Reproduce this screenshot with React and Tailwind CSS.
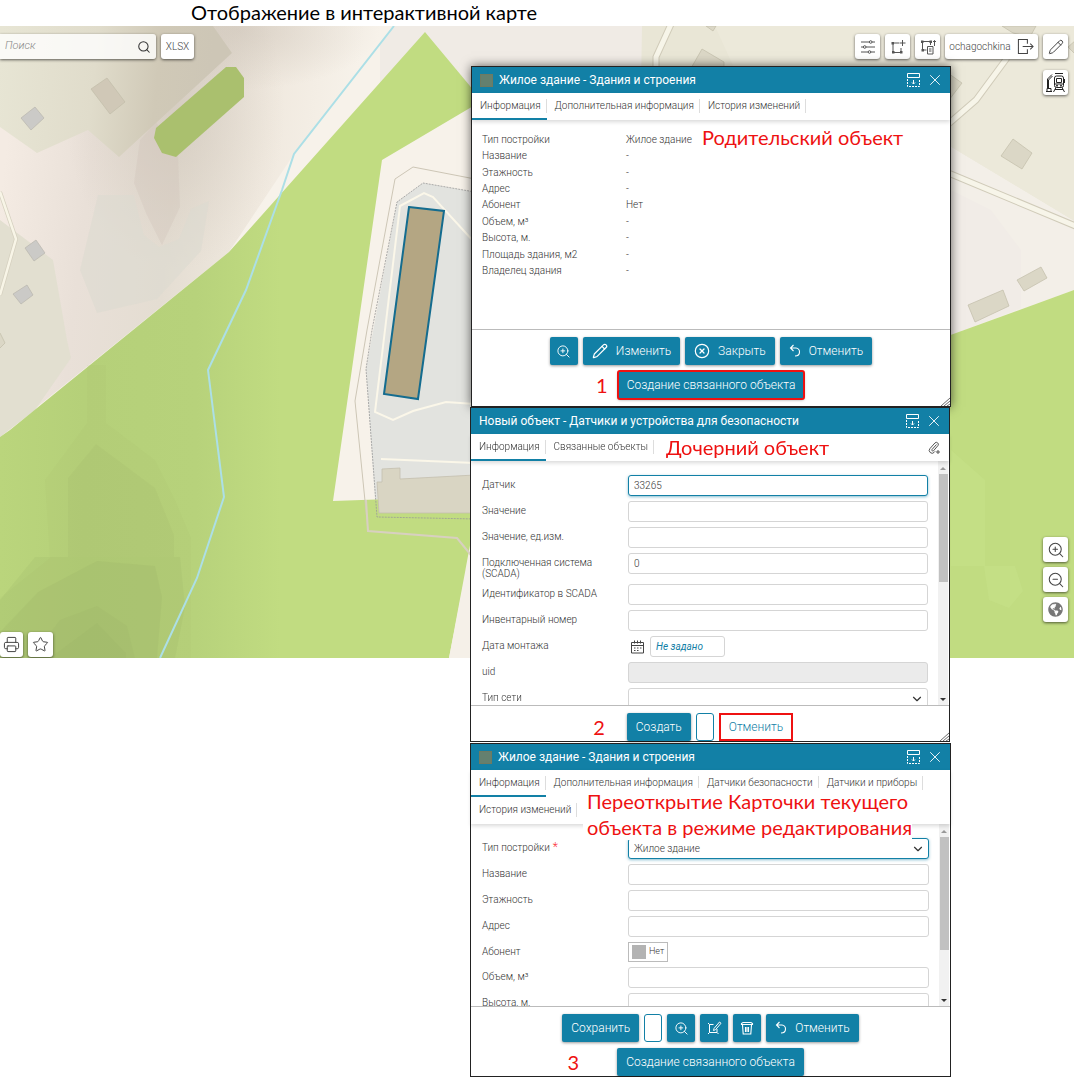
import { useState } from 'react';
import { Search, Star, Pencil, CircleX, X, ChevronDown, ZoomIn, ZoomOut, Printer } from 'lucide-react';
import { FaGlobeAmericas } from 'react-icons/fa';

const parentRows = [
  ['Тип постройки', 'Жилое здание'],
  ['Название', '-'],
  ['Этажность', '-'],
  ['Адрес', '-'],
  ['Абонент', 'Нет'],
  ['Объем, м³', '-'],
  ['Высота, м.', '-'],
  ['Площадь здания, м2', '-'],
  ['Владелец здания', '-'],
];

const SlidersIcon = () => (
  <svg width="16" height="16" viewBox="0 0 16 16" fill="none" stroke="#555" strokeWidth="1">
    <path d="M1 3h8.500M12 3h3M1 8h2.500M6 8h9M1 13h7M11 13h4" />
    <circle cx="10.700" cy="3" r="1.300" />
    <circle cx="4.700" cy="8" r="1.300" />
    <circle cx="9.500" cy="13" r="1.300" />
  </svg>
);

const AreaAddIcon = () => (
  <svg width="16" height="16" viewBox="0 0 16 16" fill="none" stroke="#555" strokeWidth="1">
    <path d="M2 4h7M3 4v9.500M3 13.500h8M11 9v4M12.500 1v6M9.500 4h6" />
    <path d="M1.500 3h2.500v2.500H1.500zM2 12h2.500v2.500H2zM10 12h2.500v2.500H10z" fill="#555" stroke="none" />
  </svg>
);

const AreaListIcon = () => (
  <svg width="16" height="16" viewBox="0 0 16 16" fill="none" stroke="#555" strokeWidth="1">
    <path d="M2 2.500h9M2.500 3v8M10.500 3v3M2.500 11h4M14.500 7V1.500M13 3l1.500-1.500L16 3" />
    <path d="M1 1.500h2.500V4H1zM9.500 1.500H12V4H9.500zM1.500 10H4v2.500H1.500z" fill="#555" stroke="none" />
    <path d="M7.500 7.500h5.500v7.500H7.500zM9 10h2.500M9 12h2.500" />
  </svg>
);

const ExitIcon = () => (
  <svg width="17" height="17" viewBox="0 0 18 18" fill="none" stroke="#444" strokeWidth="1.100">
    <path d="M11 6V1.500H1.500v15H11v-4.500M6 9h11M14 6l3 3-3 3" />
  </svg>
);

const TrainIcon = () => (
  <svg width="21" height="21" viewBox="0 0 21 21" fill="none" stroke="#222" strokeWidth="1">
    <path d="M1 19.500h6M2 19.500v-3h4v3M2.500 16V7L7 2.500M3.500 16V8L7.500 4M10 1.500h8" />
    <rect x="9.500" y="4" width="9" height="11.500" rx="2" />
    <path d="M11.500 6.500h5v4h-5zM10 12h8M11 15.500L8.500 20M17 15.500l2.500 4.500M10 17.500h8M19.500 7v4" />
    <circle cx="12" cy="13.700" r=".6" fill="#222" />
    <circle cx="16" cy="13.700" r=".6" fill="#222" />
  </svg>
);

const DockIcon = () => (
  <svg width="13" height="14" viewBox="0 0 13 14" fill="none" stroke="currentColor" strokeWidth="1">
    <path d="M.5.500h12v4H.500z" />
    <path d="M.5 6v7.500h12V6" strokeDasharray="2 1" />
    <path d="M6.500 7v4M5 9.500l1.500 1.500L8 9.500" />
  </svg>
);

const UndoIcon = () => (
  <svg width="12" height="14" viewBox="0 0 12 14" fill="none" stroke="currentColor" strokeWidth="1.100">
    <path d="M4.500 1L1.500 4l3 3M1.500 4h5.500a3.700 3.700 0 0 1 3.500 4c0 2.500-2 4-4.500 4" />
  </svg>
);

const ClipIcon = () => (
  <svg width="14" height="14" viewBox="0 0 14 14" fill="none" stroke="#555" strokeWidth="1">
    <path d="M9.500 3.500l-4.500 5a1 1 0 0 0 1.500 1.300l4.500-5.300a2 2 0 0 0-3-2.600L3 7.500a2.800 2.800 0 0 0 4.200 3.800l1-1M11 9v4M9 11h4" />
  </svg>
);

const CalendarIcon = () => (
  <svg width="13" height="14" viewBox="0 0 13 14" fill="none" stroke="#444" strokeWidth="1">
    <path d="M.5 2.500h12v10.500H.500zM.5 5.500h12M3.500.500v3M9.500.500v3M6.500.500v3" />
    <path d="M3 8h1.500M6 8h1.500M9 8h1.500M3 10.500h1.500M6 10.500h1.500" />
  </svg>
);

const EditShapeIcon = () => (
  <svg width="15" height="14" viewBox="0 0 15 14" fill="none" stroke="currentColor" strokeWidth="1">
    <path d="M1 2l1.500 1.500h4M2.500 3.500v8M1 13l1.500-1.500h7.500V8M10 11.500l1.500 1.500M7 7.500L12.500 1l1.500 1.300L8.500 8.700 6.500 9.500z" />
  </svg>
);

const TrashIcon = () => (
  <svg width="14" height="14" viewBox="0 0 14 14" fill="none" stroke="currentColor" strokeWidth="1.100">
    <path d="M1.500 3.500V2.500l1.500-1h8l1.500 1v1zM2.500 4l.7 9h7.600l.7-9M5.500 6v5M7 6v5M8.500 6v5" />
  </svg>
);

const MapCanvas = () => (
  <svg className="absolute inset-0 h-full w-full" viewBox="0 26 1074 632" preserveAspectRatio="xMinYMin slice">
    <defs>
      <linearGradient id="forest" gradientUnits="userSpaceOnUse" x1="0" y1="0" x2="280" y2="0">
        <stop offset="0" stopColor="#bad57c" />
        <stop offset=".3" stopColor="#b5d079" />
        <stop offset=".7" stopColor="#b7d27b" />
        <stop offset="1" stopColor="#c1dc81" />
      </linearGradient>
      <linearGradient id="ground" gradientUnits="userSpaceOnUse" x1="0" y1="200" x2="340" y2="240">
        <stop offset="0" stopColor="#f4ebe3" />
        <stop offset=".25" stopColor="#e9e0d8" />
        <stop offset=".5" stopColor="#e4ddd2" />
        <stop offset=".75" stopColor="#f0e9df" />
        <stop offset="1" stopColor="#f7f2ea" />
      </linearGradient>
      <linearGradient id="yard" gradientUnits="userSpaceOnUse" x1="0" y1="60" x2="210" y2="80">
        <stop offset="0" stopColor="#e7e5d4" />
        <stop offset=".45" stopColor="#e0dccb" />
        <stop offset=".75" stopColor="#d0c9b7" />
        <stop offset="1" stopColor="#cdc6b6" />
      </linearGradient>
      <radialGradient id="slope">
        <stop offset="0" stopColor="#c8beb2" stopOpacity=".5" />
        <stop offset="1" stopColor="#c8beb2" stopOpacity="0" />
      </radialGradient>
    </defs>
    <path fill="#f7f2ea" d="M0 26h1074v632H0z" />
    <path fill="#f0ebe5" d="M380 26h262v60H380z" />
    {/* terrain */}
    <path fill="url(#ground)" d="M0 26h395L294 154l-65 98L0 437z" />
    <ellipse fill="url(#slope)" cx="175" cy="110" rx="110" ry="160" />
    <ellipse fill="url(#slope)" cx="240" cy="30" rx="140" ry="60" />
    <path fill="#dcdbd0" fillOpacity=".6" d="M98 195h36l10 40 15 12 20-8 12-30 18-8-8 50-44 48-60 14-17-43z" />
    <path fill="#cdbfb6" fillOpacity=".3" d="M140 140l16-18 22 35 2 50-18 38-16-32-12-30z" />
    <path fill="url(#yard)" d="M0 26h213l19 27-113 104-31-27-51 23-37-26z" />
    <path fill="#e2dfd0" d="M0 220l53 40 14 80 4 18-36 52-35 27z" />
    {/* forest */}
    <path fill="url(#forest)" d="M425 32l50 60v13l-93 55-49 341 142-5v30l-26 132H0V437l10-7 219-178z" />
    <g fill="#98ad62" fillOpacity=".07">
      <path d="M45 480l42-57v-58h19v58l49 37 20 40 16 38v120H0v-60l50-40z" />
      <path fillOpacity=".13" d="M68 478l28-34 59 44 19 47v22H68z" />
      <path fillOpacity=".16" d="M0 600l35-43h145l5 50-10 51H0z" />
      <path fillOpacity=".18" d="M0 632l38-40 59-31 58 5 7 31-5 61H0z" />
      <path fillOpacity=".14" d="M30 658l30-38 37-14 30 20 8 32z" />
      <path fillOpacity=".14" d="M50 658l47-35 29 30v5z" />
    </g>
    <path fill="#aac06e" d="M226 67h10l8 11v19l-68 60-14-4-8-15 2-10z" />
    <path fill="#f5f0e8" d="M471 540v118h-22z" />
    {/* right side */}
    <path fill="#e9e6d6" d="M642 26h432v195l-123-74H640z" />
    <path fill="#ece9da" d="M715 26h359v195l-123-74H770z" />
    <path fill="#f3efe8" d="M951 147l123 74v69l-123 45z" />
    <path fill="#f1ece7" d="M951 190l40 20 30 40v58l-70 27z" />
    <path fill="#c1dc81" d="M945 337l129-47v368H945z" />
    <path fill="#c5df88" fillOpacity=".7" d="M951 450l34 30v86h30l8 25-14 17-20-8-5-34h-33z" />
    {/* roads */}
    <g fill="none">
      <path stroke="#d0cbb9" strokeWidth="7" d="M1007 58l-31 42-30 26M946 172l132 55M672 22l-16 35v12" />
      <path stroke="#f7f5e9" strokeWidth="5" d="M1007 58l-31 42-30 26M946 172l132 55M672 22l-16 35v12" />
      <path stroke="#d5d0bf" strokeWidth="4" d="M0 192l16 47-16 56" />
      <path stroke="#f8f5e7" strokeWidth="2.500" d="M0 192l16 47-16 56" />
    </g>
    {/* houses */}
    <g fill="#cbcac7" stroke="#b9b6ae" strokeWidth=".7">
      <path d="M21 118l14-11 9 11-13 12zM25 248l11-8 9 13-11 8zM13 294l14-9 6 10-12 9z" />
    </g>
    <g fill="#dbd7c6" stroke="#c2bda9" strokeWidth=".7">
      <path fill="#d0c8b7" d="M91 89l16-11 18 24-15 12z" />
      <path d="M1013 139l19 14-10 16-21-13zM945 71l17 12-16 21zM1002 26h34l-6 11-17-4zM1076 40l-8 7 8 8z" />
      <path d="M968 305l35-15 6 16-34 16zM1017 280l24-13 6 11-23 13zM0 333l5 10-5 5" />
      <path d="M702 49l22 13v8h-34zM706 26h10l-3 5z" />
    </g>
    {/* site */}
    <path fill="#e2e3df" d="M475 192l-52-9-26 19-31 167 9 130 100-4z" />
    <path fill="none" stroke="#999" strokeDasharray="2 1" strokeWidth=".8" d="M475 192l-52-9-26 19-25 128-6 39 11 148 98 2" />
    <path fill="none" stroke="#cdc6b6" d="M475 179l-62-12-18 12-28 151-12 71 13 130" />
    <path fill="none" stroke="#d8d0c0" strokeWidth="2" d="M366 500l2 31 89 7 18 22" />
    <path fill="none" stroke="#fbf7e9" strokeWidth="2" d="M475 243l-42-46-9-4-24 13-15 124-10 82 18 8 20-9 33-9 29 2M381 459l94 4" />
    <path fill="#d9d5c3" stroke="#c4bfae" strokeWidth=".8" d="M377 482h5v-13l18-1v11l75-4v38h-96z" />
    <path fill="#b4a683" stroke="#146c8f" strokeWidth="2" d="M409 207l35 4-26 188-34-5z" />
    <path fill="none" stroke="#acdfe6" strokeWidth="2" d="M394 26L294 154l-12 36-36 100-38 80 16 127-27 81-37 80" />
  </svg>
);

const MapButton = ({ label, className = 'w-[25px]', children }) => (
  <button
    aria-label={label}
    className={`flex h-[25px] items-center justify-center rounded-[3px] bg-white text-[10px] font-light text-[#444] shadow-[0_1px_3px_rgba(0,0,0,0.6)] ${className}`}
  >
    {children}
  </button>
);

const Panel = ({ title, swatch, className = '', children }) => (
  <section className={`border border-[#222] bg-white ${className}`}>
    <header className="flex h-[26px] items-center bg-[#1280a6] px-[6px] text-white">
      {swatch && <span className="ml-[2px] mr-[4px] h-[13px] w-[13px] border border-[#6d7a62] bg-[#64806f]"></span>}
      <h2 className="ml-[2px] flex-1 text-[12px]">{title}</h2>
      <button aria-label="Свернуть" className="mr-[6px]"><DockIcon /></button>
      <button aria-label="Закрыть окно"><X size={18} strokeWidth={1.2} /></button>
    </header>
    {children}
  </section>
);

const Tabs = ({ items, children }) => (
  <nav className="relative z-10 flex flex-wrap bg-white text-[10px] font-light text-[#333] shadow-[0_2px_4px_rgba(0,0,0,0.15)]">
    {items.map((item, i) => (
      <button
        key={item}
        className={`flex h-[27px] items-center border-b-2 ${i === 0 ? 'border-[#1280a6]' : 'border-transparent'}`}
      >
        <span className="flex h-[14px] items-center border-r border-[#ddd] pl-2 pr-[5px]">{item}</span>
      </button>
    ))}
    {children}
  </nav>
);

const ActionButton = ({ label, className = 'px-[9px]', children }) => (
  <button
    aria-label={label}
    className={`flex h-7 items-center justify-center gap-2 rounded-[2px] bg-[#1280a6] text-[12px] font-light text-white shadow-[0_1px_3px_rgba(0,0,0,0.4)] ${className}`}
  >
    {children}
  </button>
);

const Footer = ({ children }) => (
  <footer className="flex flex-col items-center gap-[6px] border-t border-[#bbb] pt-[7px]">{children}</footer>
);

const Step = ({ className = 'pr-[10px]', children }) => (
  <span className={`absolute right-full font-['Lato',sans-serif] text-[20px] text-[#ee1111] ${className}`}>{children}</span>
);

const inputStyle = 'block h-[21px] w-full rounded-[3px] border bg-white px-[5px] text-[10px] font-light text-[#333] outline-none';

const Row = ({ id, label, required, children }) => (
  <div className="flex items-start">
    <label htmlFor={id} className="w-[146px] shrink-0 pr-6 pt-1 text-[10px] leading-[11px] font-light text-[#333]">
      {label}
      {required && <span className="text-[12px] leading-[10px] text-red-500"> *</span>}
    </label>
    <div className="flex flex-1">{children}</div>
  </div>
);

const TextRow = ({ id, label, value = '', focused, disabled }) => {
  const [text, setText] = useState(value);
  return (
    <Row id={id} label={label}>
      <input
        id={id}
        value={text}
        disabled={disabled}
        autoFocus={focused}
        onChange={(e) => setText(e.target.value)}
        className={`${inputStyle} ${focused ? 'border-[#1280a6] shadow-[0_1px_3px_rgba(18,128,166,0.5)]' : 'border-[#d5d5d5]'} disabled:bg-[#ebebeb]`}
      />
    </Row>
  );
};

const SelectRow = ({ id, label, value, required, focused }) => (
  <Row id={id} label={label} required={required}>
    <div className="relative w-full">
      <select
        id={id}
        className={`${inputStyle} appearance-none ${focused ? 'border-[#1280a6] shadow-[0_1px_3px_rgba(18,128,166,0.5)]' : 'border-[#d5d5d5]'}`}
      >
        <option>{value}</option>
      </select>
      <ChevronDown size={14} strokeWidth={2} className="pointer-events-none absolute right-1 top-1 text-[#333]" />
    </div>
  </Row>
);

const ScrollForm = ({ height, thumb, children }) => (
  <div className={`flex overflow-hidden ${height}`}>
    <form className="flex flex-1 flex-col gap-[5px] pl-[11px] pr-[10px] pt-[14px]">{children}</form>
    <div className="mr-[1px] flex w-[10px] flex-col items-center justify-between bg-[#f1f1f1] pb-1 pt-[6px]">
      <span className="border-x-3 border-b-[3px] border-x-transparent border-b-[#999]"></span>
      <div className={`mb-auto mt-1 w-[9px] shrink-0 bg-[#c1c1c1] ${thumb}`}></div>
      <span className="border-x-3 border-t-[3px] border-x-transparent border-t-[#333]"></span>
    </div>
  </div>
);

const ResizeGrip = () => (
  <svg width="9" height="9" viewBox="0 0 9 9" stroke="#444" strokeWidth=".8" className="absolute bottom-0 right-0">
    <path d="M0 9L9 1M3 9l6-5M6 9l3-2" />
  </svg>
);

const App = () => (
  <div className="min-h-screen bg-white font-['Roboto',sans-serif]">
    <h1 className="h-[26px] pl-[191px] font-['Lato',sans-serif] text-[20px] leading-[24px] text-black">
      Отображение в интерактивной карте
    </h1>

    <div className="grid">
      <main className="relative col-start-1 row-start-1 mr-[3px] flex h-[632px] flex-col justify-between overflow-hidden">
        <MapCanvas />
        <div className="relative flex items-start justify-between pr-[6px] pt-2">
          <div className="flex gap-[5px]">
            <label className="flex h-[25px] w-[156px] items-center rounded-r-[3px] bg-white/80 px-[5px] shadow-[0_1px_3px_rgba(0,0,0,0.6)]">
              <input aria-label="Поиск" placeholder="Поиск" className="w-full min-w-0 text-[11px] font-light italic outline-none placeholder:text-[#888]" />
              <Search size={14} strokeWidth={1.8} className="shrink-0 text-[#333]" />
            </label>
            <MapButton className="w-[33px]">XLSX</MapButton>
          </div>
          <div className="flex flex-col items-end gap-[11px]">
            <div className="flex gap-[5px]">
              <MapButton label="Слои"><SlidersIcon /></MapButton>
              <MapButton label="Добавить область"><AreaAddIcon /></MapButton>
              <MapButton label="Список областей"><AreaListIcon /></MapButton>
              <MapButton className="w-[93px] gap-[6px]">ochagochkina<ExitIcon /></MapButton>
              <MapButton label="Рисовать"><Pencil size={16} strokeWidth={1.5} /></MapButton>
            </div>
            <MapButton label="Транспорт"><TrainIcon /></MapButton>
          </div>
        </div>
        <div className="relative">
          <div className="flex flex-col items-end gap-[5px] pr-[6px]">
            <MapButton label="Приблизить"><ZoomIn size={18} strokeWidth={1.4} /></MapButton>
            <MapButton label="Отдалить"><ZoomOut size={18} strokeWidth={1.4} /></MapButton>
            <MapButton label="Весь мир"><FaGlobeAmericas size={15} className="text-[#777]" /></MapButton>
          </div>
          <div className="flex gap-[5px] pb-[1px] pt-[10px]">
            <MapButton label="Печать" className="w-[23px]"><Printer size={17} strokeWidth={1.4} /></MapButton>
            <MapButton label="Избранное"><Star size={17} strokeWidth={1.4} /></MapButton>
          </div>
        </div>
      </main>

      <div className="relative z-10 col-start-1 row-start-1 ml-[470px] mt-10 w-[481px] self-start">
        <Panel title="Жилое здание - Здания и строения" swatch className="relative ml-[1px] shadow-[0_0_10px_rgba(0,0,0,0.6)]">
          <Tabs items={['Информация', 'Дополнительная информация', 'История изменений']} />
          <div className="flex h-[209px] items-start pl-[10px] pt-[11px]">
            <dl className="grid h-[148px] w-[210px] grid-rows-9 text-[10px] font-light text-[#333]">
              {parentRows.map(([name, value]) => (
                <div key={name} className="flex items-center">
                  <dt className="w-[144px] shrink-0">{name}</dt>
                  <dd className="whitespace-nowrap">{value}</dd>
                </div>
              ))}
            </dl>
            <p className="ml-[10px] font-['Lato',sans-serif] text-[20px] leading-[13px] text-[#ee1111]">Родительский объект</p>
          </div>
          <Footer>
            <div className="flex gap-[5px]">
              <ActionButton label="Показать на карте" className="w-7"><ZoomIn size={15} strokeWidth={1.5} /></ActionButton>
              <ActionButton><Pencil size={16} strokeWidth={1.8} />Изменить</ActionButton>
              <ActionButton><CircleX size={16} strokeWidth={1.8} />Закрыть</ActionButton>
              <ActionButton><UndoIcon />Отменить</ActionButton>
            </div>
            <div className="relative mb-[7px] flex items-center">
              <Step>1</Step>
              <ActionButton className="px-[9px] outline-2 -outline-offset-1 outline-[#ee1111]">Создание связанного объекта</ActionButton>
            </div>
          </Footer>
          <ResizeGrip />
        </Panel>

        <Panel title="Новый объект - Датчики и устройства для безопасности" className="relative mr-[1px]">
          <Tabs items={['Информация', 'Связанные объекты']}>
            <p className="ml-3 flex-1 font-['Lato',sans-serif] text-[20px] leading-[27px] font-normal text-[#ee1111]">Дочерний объект</p>
            <button aria-label="Прикрепить" className="mr-2"><ClipIcon /></button>
          </Tabs>
          <ScrollForm height="h-[244px]" thumb="h-[108px]">
            <TextRow id="sensor" label="Датчик" value="33265" focused />
            <TextRow id="value" label="Значение" />
            <TextRow id="unit" label="Значение, ед.изм." />
            <TextRow id="scada" label="Подключенная система (SCADA)" value="0" />
            <TextRow id="scada-id" label="Идентификатор в SCADA" />
            <TextRow id="inventory" label="Инвентарный номер" />
            <Row id="mount-date" label="Дата монтажа">
              <div className="flex items-center gap-[6px] pl-[3px]">
                <CalendarIcon />
                <input
                  id="mount-date"
                  placeholder="Не задано"
                  className="h-[21px] w-[75px] rounded-[3px] border border-[#d5d5d5] px-[5px] text-[10px] italic placeholder:text-[#1280a6]"
                />
              </div>
            </Row>
            <TextRow id="uid" label="uid" disabled />
            <SelectRow id="net-type" label="Тип сети" value="" />
          </ScrollForm>
          <Footer>
            <div className="relative flex items-center gap-[5px]">
              <div className="relative flex items-center">
                <Step className="pr-[22px]">2</Step>
                <ActionButton>Создать</ActionButton>
              </div>
              <button aria-label="Меню" className="h-7 w-[18px] rounded-[3px] border border-[#1280a6] bg-white"></button>
              <button className="h-7 border-2 border-[#ee1111] bg-white px-2 text-[12px] font-light text-[#1280a6]">Отменить</button>
            </div>
          </Footer>
          <ResizeGrip />
        </Panel>

        <Panel title="Жилое здание - Здания и строения" swatch className="relative mt-[1px]">
          <Tabs items={['Информация', 'Дополнительная информация', 'Датчики безопасности', 'Датчики и приборы', 'История изменений']}>
            <p className="absolute left-[112px] top-[18px] bg-white pl-1 font-['Lato',sans-serif] text-[20px] leading-[26px] font-normal text-[#ee1111]">
              Переоткрытие Карточки текущего<br />объекта в режиме редактирования
            </p>
          </Tabs>
          <ScrollForm height="h-[182px]" thumb="h-[113px]">
            <SelectRow id="build-type" label="Тип постройки" value="Жилое здание" required focused />
            <TextRow id="name" label="Название" />
            <TextRow id="floors" label="Этажность" />
            <TextRow id="address" label="Адрес" />
            <Row id="abonent" label="Абонент">
              <label className="flex h-5 items-center gap-[3px] border border-[#bbb] px-[3px] text-[9px] font-light text-[#333]">
                <input id="abonent" type="checkbox" className="h-[14px] w-[14px] appearance-none bg-[#b3b3b3]" />
                Нет
              </label>
            </Row>
            <TextRow id="volume" label="Объем, м³" />
            <TextRow id="height" label="Высота, м." />
          </ScrollForm>
          <Footer>
            <div className="flex gap-[5px]">
              <ActionButton>Сохранить</ActionButton>
              <button aria-label="Меню" className="h-7 w-[18px] rounded-[3px] border border-[#1280a6] bg-white"></button>
              <ActionButton label="Показать на карте" className="w-7"><ZoomIn size={15} strokeWidth={1.5} /></ActionButton>
              <ActionButton label="Изменить контур" className="w-7"><EditShapeIcon /></ActionButton>
              <ActionButton label="Удалить" className="w-7"><TrashIcon /></ActionButton>
              <ActionButton><UndoIcon />Отменить</ActionButton>
            </div>
            <div className="relative flex items-center">
              <Step className="pr-[38px]">3</Step>
              <ActionButton>Создание связанного объекта</ActionButton>
            </div>
          </Footer>
        </Panel>
      </div>
    </div>
  </div>
);

export default App;
